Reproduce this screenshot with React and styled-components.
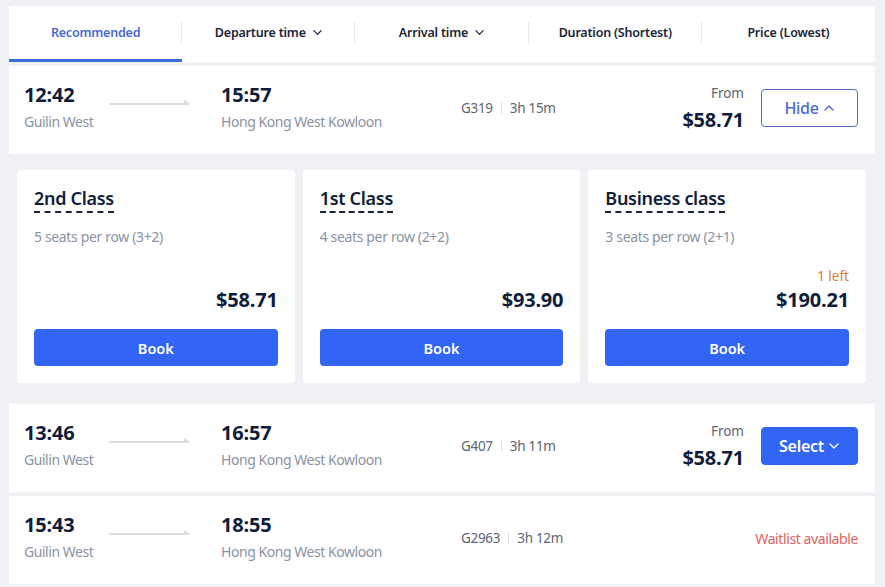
import React from 'react'
import styled, { createGlobalStyle } from 'styled-components'

const GlobalStyle = createGlobalStyle`
	html, body {
		margin: 0;
		padding: 0;
		background: #eff1f5;
		font-family: "Noto Sans", "Open Sans", sans-serif;
		color: #0f1d3a;
	}
`

const Page = styled.div`
	padding: 6px 10px 0 9px;
	display: flex;
	flex-direction: column;
`

const Tabs = styled.div`
	display: grid;
	grid-template-columns: repeat(5, 1fr);
	background: #fff;
	height: 56px;
`

const Tab = styled.div`
	position: relative;
	display: flex;
	align-items: center;
	justify-content: center;
	gap: 6px;
	font-size: 12.5px;
	font-weight: 600;
	letter-spacing: -0.2px;
	color: ${p => (p.active ? '#4a6ad8' : '#1b2538')};
	border-bottom: 3px solid ${p => (p.active ? '#3b6fd8' : 'transparent')};
	&:not(:first-child)::before {
		content: '';
		position: absolute;
		left: -1px;
		top: 16px;
		height: 21px;
		width: 1px;
		background: #e3e6eb;
	}
`

const Row = styled.div`
	display: flex;
	align-items: center;
	background: #fff;
	height: 88px;
	padding: 0 17px 0 15px;
	margin-top: ${p => p.gap || 0}px;
`

const Stop = styled.div`
	display: flex;
	flex-direction: column;
	gap: 6px;
	width: ${p => p.w}px;
	margin-bottom: 7px;
`

const Time = styled.div`
	font-size: 20px;
	font-weight: 700;
	line-height: 24px;
	letter-spacing: -0.2px;
`

const Station = styled.div`
	font-size: 14px;
	line-height: 18px;
	color: #8a93a3;
	letter-spacing: -0.45px;
	white-space: nowrap;
`

const ArrowWrap = styled.div`
	width: 112px;
	align-self: flex-start;
	margin-top: 23px;
`

const TrainInfo = styled.div`
	display: flex;
	align-items: center;
	gap: 8px;
	margin-left: 80px;
	margin-bottom: 5px;
	font-size: 13.5px;
	letter-spacing: -0.3px;
	color: #5d6573;
	flex: 1;
`

const Sep = styled.span`
	width: 1px;
	height: 12px;
	background: #dde0e5;
`

const PriceCol = styled.div`
	display: flex;
	flex-direction: column;
	align-items: flex-end;
	margin-right: 17px;
	margin-top: 2px;
`

const From = styled.div`
	font-size: 13.5px;
	color: #5d6573;
	line-height: 18px;
`

const Price = styled.div`
	font-size: 20px;
	font-weight: 700;
	line-height: 36px;
	letter-spacing: -0.2px;
`

const CardAmount = styled(Price)`
	line-height: 28px;
	margin-bottom: 1px;
`

const ActionButton = styled.button`
	width: 97px;
	height: 38px;
	border-radius: 4px;
	display: flex;
	align-items: center;
	justify-content: center;
	gap: 4px;
	font-family: inherit;
	font-size: 16px;
	font-weight: ${p => (p.outline ? 500 : 600)};
	letter-spacing: -0.3px;
	border: 1px solid ${p => (p.outline ? '#4f6fb8' : '#3264f5')};
	background: ${p => (p.outline ? '#fff' : '#3264f5')};
	color: ${p => (p.outline ? '#4a6ad8' : '#fff')};
	margin-bottom: 4px;
`

const Waitlist = styled.div`
	font-size: 14px;
	color: #e06262;
	letter-spacing: -0.4px;
	margin-bottom: 4px;
`

const Expanded = styled.div`
	display: grid;
	grid-template-columns: repeat(3, 1fr);
	gap: 8px;
	padding: 16px 9px 12px 8px;
`

const Card = styled.div`
	background: #fff;
	border-radius: 4px;
	height: 213px;
	padding: 17px;
	box-sizing: border-box;
	display: flex;
	flex-direction: column;
`

const ClassName = styled.div`
	align-self: flex-start;
	font-size: 18px;
	font-weight: 600;
	line-height: 24px;
	letter-spacing: -0.3px;
	border-bottom: 2px dashed #1b2538;
	padding-bottom: 1px;
	margin-top: -1px;
`

const Seats = styled.div`
	font-size: 14px;
	color: #8a93a3;
	letter-spacing: -0.35px;
	margin-top: 14px;
`

const CardPrice = styled.div`
	margin-top: auto;
	display: flex;
	flex-direction: column;
	align-items: flex-end;
`

const Left = styled.div`
	font-size: 13.5px;
	color: #e07a3c;
	line-height: 18px;
	margin-bottom: 1px;
`

const Book = styled.button`
	margin-top: 14px;
	height: 37px;
	border: none;
	border-radius: 4px;
	background: #3264f5;
	color: #fff;
	font-family: inherit;
	font-size: 14.5px;
	font-weight: 600;
`

const Chevron = ({ up, color = 'currentColor', size = 12 }) => (
	<svg width={size} height={size} viewBox="0 0 12 12" fill="none">
		<path d={up ? 'M2 8l4-4 4 4' : 'M2 4l4 4 4-4'} stroke={color} strokeWidth="1.4" strokeLinecap="round" strokeLinejoin="round" />
	</svg>
)

const Arrow = () => (
	<ArrowWrap>
		<svg width="82" height="8" viewBox="0 0 82 8">
			<line x1="0" y1="6" x2="80" y2="6" stroke="#dcdcdc" strokeWidth="2" />
			<path d="M75 2 L81 6 L75 6 Z" fill="#dcdcdc" />
		</svg>
	</ArrowWrap>
)

const tabs = [
	{ label: 'Recommended', active: true },
	{ label: 'Departure time', chevron: true },
	{ label: 'Arrival time', chevron: true },
	{ label: 'Duration (Shortest)' },
	{ label: 'Price (Lowest)' },
]

const classes = [
	{ name: '2nd Class', seats: '5 seats per row (3+2)', price: '$58.71' },
	{ name: '1st Class', seats: '4 seats per row (2+2)', price: '$93.90' },
	{ name: 'Business class', seats: '3 seats per row (2+1)', price: '$190.21', left: '1 left' },
]

const TrainRow = ({ dep, arr, no, dur, children, gap }) => (
	<Row gap={gap}>
		<Stop w={85}>
			<Time>{dep}</Time>
			<Station>Guilin West</Station>
		</Stop>
		<Arrow />
		<Stop w={160}>
			<Time>{arr}</Time>
			<Station>Hong Kong West Kowloon</Station>
		</Stop>
		<TrainInfo>
			<span>{no}</span>
			<Sep />
			<span>{dur}</span>
		</TrainInfo>
		{children}
	</Row>
)

export default function App() {
	return (
		<>
			<GlobalStyle />
			<Page>
				<Tabs>
					{tabs.map(t => (
						<Tab key={t.label} active={t.active}>
							{t.label}
							{t.chevron && <Chevron color="#1b2538" size={11} />}
						</Tab>
					))}
				</Tabs>
				<TrainRow dep="12:42" arr="15:57" no="G319" dur="3h 15m" gap={4}>
					<PriceCol>
						<From>From</From>
						<Price>$58.71</Price>
					</PriceCol>
					<ActionButton outline>
						Hide <Chevron up />
					</ActionButton>
				</TrainRow>
				<Expanded>
					{classes.map(c => (
						<Card key={c.name}>
							<ClassName>{c.name}</ClassName>
							<Seats>{c.seats}</Seats>
							<CardPrice>
								{c.left && <Left>{c.left}</Left>}
								<CardAmount>{c.price}</CardAmount>
							</CardPrice>
							<Book>Book</Book>
						</Card>
					))}
				</Expanded>
				<TrainRow dep="13:46" arr="16:57" no="G407" dur="3h 11m" gap={9}>
					<PriceCol>
						<From>From</From>
						<Price>$58.71</Price>
					</PriceCol>
					<ActionButton>
						Select <Chevron />
					</ActionButton>
				</TrainRow>
				<TrainRow dep="15:43" arr="18:55" no="G2963" dur="3h 12m" gap={4}>
					<Waitlist>Waitlist available</Waitlist>
				</TrainRow>
			</Page>
		</>
	)
}
